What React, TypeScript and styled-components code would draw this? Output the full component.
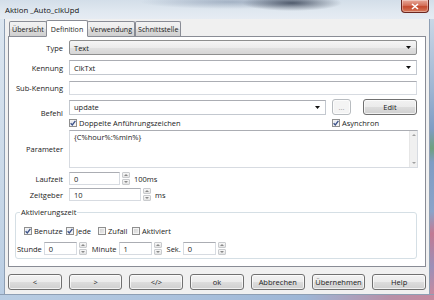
import styled, { createGlobalStyle } from 'styled-components';

const GlobalStyle = createGlobalStyle`
  html, body {
    margin: 0;
    padding: 0;
    background: #ffffff;
  }
  body {
    font-family: "Open Sans", "Noto Sans", sans-serif;
    font-size: 7.5px;
    color: #1b1b1b;
  }
  * { box-sizing: border-box; }
`;

const Check = ({ checked }: { checked: boolean }) => (
  <CheckBox $checked={checked}>
    {checked && (
      <svg width="6" height="6" viewBox="0 0 6 6">
        <path d="M0.6 3.2 L2.3 5 L5.4 0.8" fill="none" stroke="#3d5289" strokeWidth="1.3" />
      </svg>
    )}
  </CheckBox>
);

const Arrow = () => (
  <svg width="5" height="3" viewBox="0 0 5 3">
    <path d="M0 0 H5 L2.5 3 Z" fill="#111" />
  </svg>
);

const Spinner = () => (
  <SpinWrap>
    <SpinHalf>
      <svg width="4" height="2" viewBox="0 0 4 2">
        <path d="M0 2 H4 L2 0 Z" fill="#8a8a8a" />
      </svg>
    </SpinHalf>
    <SpinHalf>
      <svg width="4" height="2" viewBox="0 0 4 2">
        <path d="M0 0 H4 L2 2 Z" fill="#8a8a8a" />
      </svg>
    </SpinHalf>
  </SpinWrap>
);

const tabs = ['Übersicht', 'Definition', 'Verwendung', 'Schnittstelle'];
const footer = ['<', '>', '</>', 'ok', 'Abbrechen', 'Übernehmen', 'Help'];

const App = () => {
  return (
    <>
      <GlobalStyle />
      <Window>
        <TitleBar>
          <Title>Aktion _Auto_clkUpd</Title>
          <CloseButton>
            <svg width="8" height="7" viewBox="0 0 8 7">
              <path d="M1 1 L7 6 M7 1 L1 6" stroke="#ffffff" strokeWidth="1.6" />
            </svg>
          </CloseButton>
        </TitleBar>

        <Middle>
          <LeftFrame />
          <Client>
            <TabRow>
              {tabs.map(t => (
                <Tab key={t} $active={t === 'Definition'}>
                  {t}
                </Tab>
              ))}
            </TabRow>

            <Panel>
              <Row $top={3}>
                <Label>Type</Label>
                <DropList>
                  Text
                  <Arrow />
                </DropList>
              </Row>

              <Row $top={5}>
                <Label>Kennung</Label>
                <Combo>
                  ClkTxt
                  <Arrow />
                </Combo>
              </Row>

              <Row $top={6}>
                <Label>Sub-Kennung</Label>
                <TextBox $h={14} />
              </Row>

              <Row $top={4}>
                <Label>Befehl</Label>
                <Stack>
                  <Inline>
                    <Combo $grow>
                      update
                      <Arrow />
                    </Combo>
                    <Button $w={19} $disabled>
                      ...
                    </Button>
                    <Button $w={54} $left={12}>
                      Edit
                    </Button>
                  </Inline>
                  <Inline>
                    <CheckItem $grow>
                      <Check checked />
                      Doppelte Anführungszeichen
                    </CheckItem>
                    <CheckItem $w={85}>
                      <Check checked />
                      Asynchron
                    </CheckItem>
                  </Inline>
                </Stack>
              </Row>

              <Row $top={3}>
                <Label>Parameter</Label>
                <TextArea>
                  <AreaText>{'{C%hour%:%min%}'}</AreaText>
                  <ScrollBar>
                    <svg width="4" height="2" viewBox="0 0 4 2">
                      <path d="M0 2 H4 L2 0 Z" fill="#a0a0a0" />
                    </svg>
                    <svg width="4" height="2" viewBox="0 0 4 2">
                      <path d="M0 0 H4 L2 2 Z" fill="#a0a0a0" />
                    </svg>
                  </ScrollBar>
                </TextArea>
              </Row>

              <Row $top={4}>
                <Label>Laufzeit</Label>
                <Inline>
                  <TextBox $h={13} $w={51}>0</TextBox>
                  <Spinner />
                  <Unit>100ms</Unit>
                </Inline>
              </Row>

              <Row $top={3}>
                <Label>Zeitgeber</Label>
                <Inline>
                  <TextBox $h={13} $w={72}>10</TextBox>
                  <Spinner />
                  <Unit>ms</Unit>
                </Inline>
              </Row>

              <Group>
                <Legend>Aktivierungszeit</Legend>
                <Inline>
                  <CheckItem $w={42}>
                    <Check checked />
                    Benutze
                  </CheckItem>
                  <CheckItem $w={32}>
                    <Check checked />
                    Jede
                  </CheckItem>
                  <CheckItem $w={34}>
                    <Check checked={false} />
                    Zufall
                  </CheckItem>
                  <CheckItem>
                    <Check checked={false} />
                    Aktiviert
                  </CheckItem>
                </Inline>
                <TimeRow>
                  <TimeLabel>Stunde</TimeLabel>
                  <TextBox $h={13} $w={33}>0</TextBox>
                  <Spinner />
                  <TimeLabel $left={5}>Minute</TimeLabel>
                  <TextBox $h={13} $w={33}>1</TextBox>
                  <Spinner />
                  <TimeLabel $left={5}>Sek.</TimeLabel>
                  <TextBox $h={13} $w={33}>0</TextBox>
                  <Spinner />
                </TimeRow>
              </Group>
            </Panel>

            <Footer>
              {footer.map(b => (
                <FooterButton key={b}>{b}</FooterButton>
              ))}
            </Footer>
          </Client>
          <RightFrame />
        </Middle>
        <BottomFrame />
      </Window>
    </>
  );
};

export default App;

const Window = styled.div`
  display: flex;
  flex-direction: column;
  width: 434px;
  height: 300px;
  overflow: hidden;
`;

const TitleBar = styled.div`
  display: flex;
  flex: none;
  justify-content: space-between;
  align-items: flex-start;
  height: 19px;
  padding: 0 5px 0 5px;
  background:
    radial-gradient(ellipse 50px 8px at 292px 3px, rgba(30, 40, 60, 0.7), rgba(30, 40, 60, 0) 100%),
    radial-gradient(ellipse 90px 7px at 230px 2px, rgba(90, 110, 140, 0.4), rgba(90, 110, 140, 0) 100%),
    linear-gradient(to bottom, #d3dee9 0%, #e0e8f0 60%, #e6ecf3 100%);
`;

const Title = styled.div`
  padding-top: 5px;
  font-size: 7.8px;
  line-height: 10px;
  color: #111;
`;

const CloseButton = styled.div`
  display: flex;
  align-items: center;
  justify-content: center;
  width: 28px;
  height: 13px;
  border: 1px solid #6b2620;
  border-top: none;
  border-radius: 0 0 4px 4px;
  background: linear-gradient(to bottom, #e8a99a 0%, #d4715b 45%, #c44a2f 55%, #d77a5c 100%);
  box-shadow: inset 0 0 0 1px rgba(255, 255, 255, 0.35);
`;

const Middle = styled.div`
  display: flex;
  flex: 1;
  min-height: 0;
`;

const LeftFrame = styled.div`
  flex: none;
  width: 5px;
  background: linear-gradient(to bottom, #dce6f0, #c9d8e8 60%, #b9cde3);
  border-right: 1px solid #8e9fb4;
`;

const RightFrame = styled.div`
  flex: none;
  width: 5px;
  border-left: 1px solid #8e9fb4;
  background: linear-gradient(
    to bottom,
    #c9d7e6 0%,
    #9fb6d3 25%,
    #7f9cc4 40%,
    #6ea07e 47%,
    #7f9cc4 52%,
    #8aa3c9 70%,
    #c27a93 78%,
    #9c8fb8 90%,
    #c58aa0 100%
  );
`;

const BottomFrame = styled.div`
  flex: none;
  height: 6px;
  border-top: 1px solid #8e9fb4;
  background: linear-gradient(to right, #b9cde3 0%, #a9c0dc 45%, #9db6d6 70%, #b890a8 90%, #c58aa0 100%);
`;

const Client = styled.div`
  display: flex;
  flex: 1;
  flex-direction: column;
  min-width: 0;
  padding: 1px 3px 4px 2px;
  background: #f0f0f0;
`;

const TabRow = styled.div`
  display: flex;
  align-items: flex-end;
  height: 17px;
  padding-left: 2px;
  margin-bottom: -1px;
  position: relative;
  z-index: 1;
`;

const Tab = styled.div<{ $active: boolean }>`
  display: flex;
  align-items: center;
  height: ${p => (p.$active ? '17px' : '15px')};
  margin: ${p => (p.$active ? '0 -1px' : '0 0 1px 0')};
  padding: ${p => (p.$active ? '0 4px' : '0 2px')};
  border: 1px solid #898c95;
  border-bottom: ${p => (p.$active ? '1px solid #ffffff' : 'none')};
  border-radius: 2px 2px 0 0;
  font-size: 7.1px;
  background: ${p =>
    p.$active ? '#ffffff' : 'linear-gradient(to bottom, #f2f2f2, #ebebeb 50%, #dddddd 50%, #cfcfcf)'};
`;

const Panel = styled.div`
  display: flex;
  flex-direction: column;
  height: 231px;
  min-width: 0;
  margin-left: 1px;
  padding: 0 8px 0 0;
  border: 1px solid #898c95;
  background: #ffffff;
`;

const Row = styled.div<{ $top: number }>`
  display: grid;
  grid-template-columns: 54px minmax(0, 1fr);
  column-gap: 6px;
  align-items: center;
  margin-top: ${p => p.$top}px;
`;

const Label = styled.div`
  text-align: right;
  white-space: nowrap;
`;

const DropList = styled.div`
  display: flex;
  align-items: center;
  justify-content: space-between;
  height: 15px;
  padding: 0 5px 0 4px;
  border: 1px solid #8e8f8f;
  border-radius: 2px;
  background: linear-gradient(to bottom, #f6f6f6 0%, #ececec 50%, #e1e1e1 51%, #d6d6d6 100%);
`;

const Combo = styled.div<{ $grow?: boolean }>`
  display: flex;
  align-items: center;
  justify-content: space-between;
  flex: ${p => (p.$grow ? 1 : 'initial')};
  height: 15px;
  padding: 0 5px 0 4px;
  border: 1px solid #c3c8cf;
  border-top-color: #abadb3;
  background: #ffffff;
`;

const TextBox = styled.div<{ $h: number; $w?: number }>`
  display: flex;
  align-items: center;
  flex: none;
  width: ${p => (p.$w ? `${p.$w}px` : 'auto')};
  height: ${p => p.$h}px;
  padding-left: 4px;
  border: 1px solid #d7dbe1;
  border-top-color: #abadb3;
  background: #ffffff;
`;

const Stack = styled.div`
  display: flex;
  flex-direction: column;
  gap: 3px;
`;

const Inline = styled.div`
  display: flex;
  align-items: center;
`;

const Button = styled.div<{ $w: number; $left?: number; $disabled?: boolean }>`
  display: flex;
  flex: none;
  align-items: center;
  justify-content: center;
  width: ${p => p.$w}px;
  height: 16px;
  margin-left: ${p => p.$left ?? 6}px;
  border: 1px solid ${p => (p.$disabled ? '#b8bcc0' : '#707070')};
  border-radius: 3px;
  color: ${p => (p.$disabled ? '#9a9a9a' : '#1b1b1b')};
  background: ${p =>
    p.$disabled
      ? '#f4f4f4'
      : 'linear-gradient(to bottom, #f2f2f2 0%, #ebebeb 50%, #dddddd 51%, #cfcfcf 100%)'};
  box-shadow: inset 0 0 0 1px rgba(255, 255, 255, 0.7);
`;

const CheckItem = styled.div<{ $grow?: boolean; $w?: number }>`
  display: flex;
  align-items: center;
  gap: 2px;
  flex: ${p => (p.$grow ? 1 : 'none')};
  width: ${p => (p.$w ? `${p.$w}px` : 'auto')};
  height: 9px;
  white-space: nowrap;
`;

const CheckBox = styled.span<{ $checked: boolean }>`
  display: inline-flex;
  flex: none;
  align-items: center;
  justify-content: center;
  width: 8px;
  height: 8px;
  border: 1px solid #8f8f8f;
  background: ${p =>
    p.$checked
      ? 'linear-gradient(135deg, #dfe4ec, #f8f9fb)'
      : 'linear-gradient(135deg, #cfcfcf, #efefef)'};
  box-shadow: inset 0 0 0 1px #f4f4f4;
`;

const TextArea = styled.div`
  display: flex;
  justify-content: space-between;
  height: 38px;
  margin-right: -1px;
  border: 1px solid #d7dbe1;
  border-top-color: #abadb3;
  background: #ffffff;
`;

const AreaText = styled.div`
  padding: 1px 0 0 4px;
  line-height: 10px;
`;

const ScrollBar = styled.div`
  display: flex;
  flex-direction: column;
  justify-content: space-between;
  align-items: center;
  width: 8px;
  padding: 3px 0;
  background: #f0f0f0;
  border-left: 1px solid #e6e6e6;
`;

const SpinWrap = styled.div`
  display: flex;
  flex: none;
  flex-direction: column;
  gap: 1px;
  margin-left: 2px;
`;

const SpinHalf = styled.div`
  display: flex;
  align-items: center;
  justify-content: center;
  width: 8px;
  height: 6px;
  border: 1px solid #c9cbce;
  border-radius: 1px;
  background: linear-gradient(to bottom, #f7f7f7, #e4e4e4);
`;

const Unit = styled.span`
  margin-left: 4px;
`;

const Group = styled.fieldset`
  display: flex;
  flex-direction: column;
  gap: 7px;
  height: 51px;
  min-width: 0;
  margin: 7px 0 0 6px;
  padding: 9px 0 4px 8px;
  border: 1px solid #d5dfe5;
  border-radius: 3px;
`;

const Legend = styled.legend`
  margin-left: -4px;
  padding: 0 1px;
  line-height: 9px;
`;

const TimeRow = styled.div`
  display: flex;
  align-items: center;
  margin-left: -7px;
`;

const TimeLabel = styled.span<{ $left?: number }>`
  margin: 0 2px 0 ${p => p.$left ?? 0}px;
`;

const Footer = styled.div`
  display: flex;
  gap: 7px;
  margin-top: auto;
  padding-left: 1px;
`;

const FooterButton = styled.div`
  display: flex;
  flex: 1;
  align-items: center;
  justify-content: center;
  height: 16px;
  border: 1px solid #707070;
  border-radius: 3px;
  background: linear-gradient(to bottom, #f2f2f2 0%, #ebebeb 50%, #dddddd 51%, #cfcfcf 100%);
  box-shadow: inset 0 0 0 1px rgba(255, 255, 255, 0.7);
`;
